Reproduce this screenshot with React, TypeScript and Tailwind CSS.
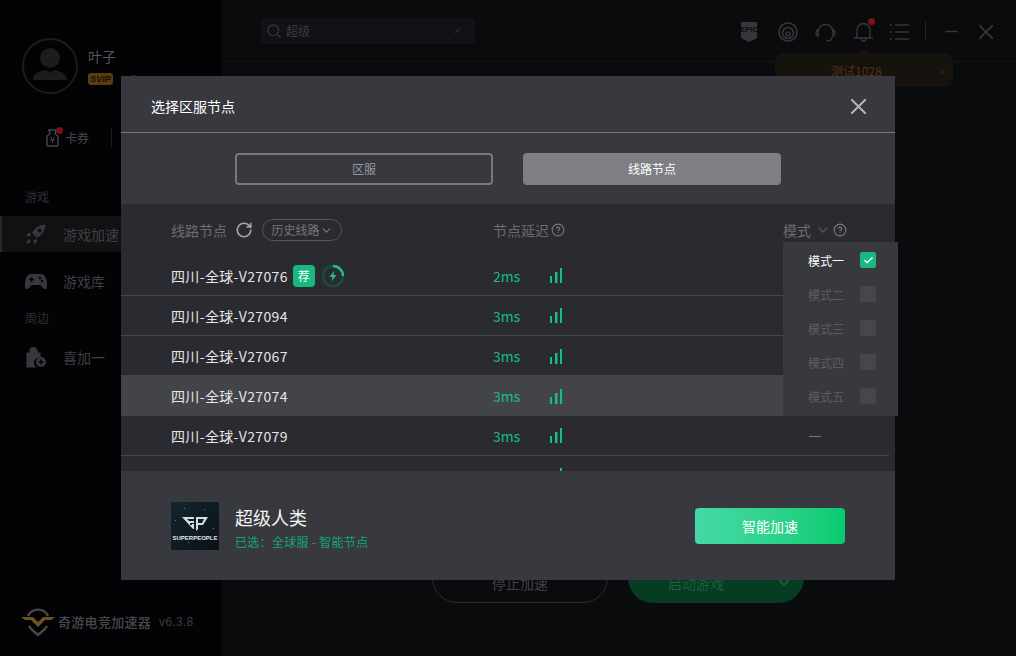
import React from 'react';
import { ChevronDown, RotateCw, Search, X, Check, Minus, HelpCircle } from 'lucide-react';

const font = { fontFamily: '"Noto Sans CJK SC", "Noto Sans", sans-serif' };

const rows = [
  { name: '四川-全球-V27076', ms: '2ms', best: true, line: true },
  { name: '四川-全球-V27094', ms: '3ms', line: true },
  { name: '四川-全球-V27067', ms: '3ms' },
  { name: '四川-全球-V27074', ms: '3ms', hover: true },
  { name: '四川-全球-V27079', ms: '3ms', dash: true, line: true },
];

const modes = ['模式一', '模式二', '模式三', '模式四', '模式五'];

const Signal = () => (
  <svg width="14" height="16" viewBox="0 0 14 16" className="block">
    <rect x="1" y="8" width="2" height="7" fill="#16bd84" />
    <rect x="6" y="4" width="2.500" height="11" fill="#16bd84" />
    <rect x="11" y="0" width="2" height="15" fill="#16bd84" />
  </svg>
);

const Bolt = () => (
  <svg width="24" height="24" viewBox="0 0 24 24" className="block">
    <circle cx="12" cy="12" r="10" fill="none" stroke="#1f4a42" strokeWidth="2.400" />
    <path d="M12 2a10 10 0 0 1 10 10" fill="none" stroke="#1cc08a" strokeWidth="2.400" />
    <path d="M13.500 6.500 8.500 13h3l-1 4.500 5-6.500h-3z" fill="#1cc08a" />
  </svg>
);

const SuperPeople = () => (
  <div className="w-12 h-12 bg-gradient-to-br from-[#12262e] to-[#0a1218] flex flex-col items-center justify-center relative">
    <span className="absolute left-[13px] top-[6px] w-px h-px bg-[#8a7350]" />
    <span className="absolute left-[33px] top-[7px] w-px h-px bg-[#6b7a80]" />
    <span className="absolute left-[4px] top-[18px] w-px h-px bg-[#6b7a80]" />
    <span className="absolute left-[42px] top-[26px] w-px h-px bg-[#8a7350]" />
    <span className="absolute left-[17px] top-[40px] w-px h-px bg-[#8a7350]" />
    <svg width="26" height="14" viewBox="0 0 26 14" className="block mt-[8px]">
      <path d="M0 0h12v2H5l2 2h5v2H8v2h2V7h2v5h-1zM14 0h12l-5 8h-5v4l-2 2zM16 2v4h4l2-4z" fill="#d8dde0" />
    </svg>
    <span className="text-[6px] leading-[8px] font-bold text-[#e6e8ea] mt-[3px] whitespace-nowrap" style={{ fontFamily: '"Liberation Sans", sans-serif' }}>SUPERPEOPLE</span>
  </div>
);

const Sidebar = () => (
  <aside className="w-[222px] shrink-0 bg-[#030305] flex flex-col text-[#3f4044] text-[14px]">
    <div className="flex items-center gap-[10px] pl-[22px] pt-[38px]">
      <div className="w-[56px] h-[56px] rounded-full border-2 border-[#1c1c1f] flex items-end justify-center overflow-hidden">
        <svg width="36" height="34" viewBox="0 0 36 34" className="mb-[11px]">
          <circle cx="18" cy="11" r="10" fill="#1c1c1f" />
          <path d="M1 33c0-7 8-9 13-10l4 3 4-3c5 1 13 3 13 10z" fill="#1c1c1f" />
        </svg>
      </div>
      <div className="flex flex-col gap-[8px]">
        <span className="text-[14px] leading-[18px] text-[#55565a]">叶子</span>
        <div className="flex items-center">
          <span className="w-[25px] h-[12px] rounded-[3px] bg-[#5a3b12] text-[#1a1207] text-[9px] leading-[12px] font-bold italic text-center" style={{ fontFamily: '"Liberation Sans", sans-serif' }}>SVIP</span>
          <span className="ml-[16px] w-[9px] h-[9px] rounded-full bg-[#2a2a2d]" />
        </div>
      </div>
    </div>
    <div className="flex items-center pl-[46px] mt-[34px] h-[20px] text-[12px]">
      <div className="relative mr-[6px]">
        <svg width="13" height="18" viewBox="0 0 13 18" className="block">
          <path d="M3 1h7l-1 4 3 2v9a1 1 0 0 1-1 1H2a1 1 0 0 1-1-1V7l3-2z" fill="none" stroke="#47484c" strokeWidth="1.400" />
          <path d="M4.500 8 6.500 10.500 8.500 8M4 11h5M6.500 10.500V14" fill="none" stroke="#47484c" strokeWidth="1" />
        </svg>
        <span className="absolute -top-[2px] -right-[4px] w-[7px] h-[7px] rounded-full bg-[#7c1116]" />
      </div>
      <span className="text-[#47484c]">卡券</span>
      <span className="w-px h-[20px] bg-[#1c1c1f] ml-[22px]" />
    </div>
    <div className="pl-[25px] mt-[39px] h-[20px] leading-[20px] text-[12px] text-[#2f3034]">游戏</div>
    <div className="flex items-center gap-[17px] pl-[24px] h-[36px] mt-[9px] bg-[#111113] border-l-2 border-[#2a2a2d]">
      <svg width="20" height="20" viewBox="0 0 20 20" className="block" fill="#37383b">
        <path d="M19.500.5C13 1 9 4 6 9l5 5c5-3 8-7 8.500-13.500zM13.500 4.500a2 2 0 1 0 .01 0z" fillRule="evenodd" />
        <path d="M5 9H2L0 12l4 .5zM11 15v3l-3 2-.5-4zM3 15c-2 1-2.500 3-2.500 4.500 1.500 0 3.500-.5 4.500-2.500z" />
      </svg>
      <span>游戏加速</span>
    </div>
    <div className="flex items-center gap-[16px] pl-[25px] h-[36px] mt-[11px]">
      <svg width="22" height="17" viewBox="0 0 22 17" className="block" fill="#37383b">
        <path d="M6 1h10c3 0 5 3 6 8s0 7-2 7-3-2-4.500-4h-9C5 14 4 16 2 16s-3-2-2-7 3-8 6-8z" />
        <path d="M6.500 4v5M4 6.500h5" stroke="#030305" strokeWidth="1.500" />
        <circle cx="15" cy="5" r="1.200" fill="#030305" />
        <circle cx="17" cy="8" r="1.200" fill="#030305" />
      </svg>
      <span>游戏库</span>
    </div>
    <div className="pl-[25px] h-[20px] leading-[20px] mt-[9px] text-[12px] text-[#2f3034]">周边</div>
    <div className="flex items-center gap-[16px] pl-[25px] h-[36px] mt-[11px]">
      <svg width="22" height="22" viewBox="0 0 22 22" className="block">
        <path d="M2 7h13v4a6 6 0 0 0-5 10H2zM5 7V5a3.500 3.500 0 0 1 7 0v2" fill="#37383b" stroke="#37383b" strokeWidth="1.200" />
        <circle cx="16" cy="16" r="5" fill="#37383b" />
        <path d="M16 13.500v5M13.500 16h5" stroke="#030305" strokeWidth="1.400" />
      </svg>
      <span>喜加一</span>
    </div>
    <div className="mt-auto mb-[19px] pl-[21px] flex items-center">
      <svg width="34" height="30" viewBox="0 0 34 30" className="block">
        <path d="M7 9a11 11 0 0 1 20 0M8 19c2 4 6 6 9 9 3-3 7-5 9-9" fill="none" stroke="#47484c" strokeWidth="2.400" />
        <path d="M0 10h12l5 5 5-5h12l-4 3h-6l-7 7-7-7H4z" fill="#6b5422" />
      </svg>
      <span className="ml-[3px] text-[13px] tracking-[0.3px] font-medium text-[#47484c]">奇游电竞加速器</span>
      <span className="ml-[8px] text-[12px] tracking-[0.3px] text-[#3a3b40]" style={{ fontFamily: '"Liberation Sans", sans-serif' }}>v6.3.8</span>
    </div>
  </aside>
);

const Main = () => (
  <main className="flex-1 bg-[#0a0b0d] flex flex-col relative">
    <header className="h-[62px] border-b border-[#111215] flex items-center shrink-0">
      <div className="ml-[39px] w-[214px] h-[26px] rounded-[4px] bg-[#111215] flex items-center px-[5px] text-[12px] text-[#3c3d41]">
        <Search size={16} stroke="#333438" />
        <span className="ml-[4px]">超级</span>
        <X size={9} stroke="#36373b" className="ml-auto mr-[8px]" />
      </div>
      <div className="ml-auto flex items-center pt-[2px] text-[#36373b]">
        <svg width="16" height="20" viewBox="0 0 16 20" className="mr-[21px] block">
          <path d="M0 0h16v16l-8 4-8-4z" fill="#36373b" />
          <text x="8" y="10" textAnchor="middle" fontSize="8" fontWeight="700" fill="#0a0b0d" style={{ fontFamily: '"Liberation Sans", sans-serif' }}>EPIC</text>
        </svg>
        <svg width="20" height="20" viewBox="0 0 20 20" className="mr-[17px] block" fill="none" stroke="#36373b" strokeWidth="1.600">
          <circle cx="10" cy="10" r="9" />
          <circle cx="10" cy="11" r="5.500" />
          <circle cx="10" cy="12" r="2" />
        </svg>
        <svg width="21" height="20" viewBox="0 0 21 20" className="mr-[18px] block" fill="none" stroke="#36373b" strokeWidth="1.400">
          <path d="M3 10a7.500 7.500 0 0 1 15 0" />
          <path d="M3 7.500C1.500 8.500 1 10 1 11s.5 2.500 2 3.500zM18 7.500c1.500 1 2 2.500 2 3.500s-.5 2.500-2 3.500z" />
          <path d="M17 15c0 3-3 4-5.500 4" />
        </svg>
        <div className="relative mr-[17px]">
          <svg width="19" height="21" viewBox="0 0 19 21" className="block" fill="none" stroke="#36373b" strokeWidth="1.400">
            <path d="M0 17h19M3 17V9a6.500 6.500 0 0 1 13 0v8M7 17a2.500 3 0 0 0 5 0" />
          </svg>
          <span className="absolute -top-[3px] -right-[2px] w-[7px] h-[7px] rounded-full bg-[#7c1116]" />
        </div>
        <svg width="19" height="16" viewBox="0 0 19 16" className="mr-[16px] block" stroke="#36373b" strokeWidth="1.500">
          <path d="M5 1h14M5 8h14M5 15h14M0 1h2M0 8h2M0 15h2" />
        </svg>
        <span className="w-px h-[19px] bg-[#26272a] mr-[16px]" />
        <Minus size={19} strokeWidth={2} className="mr-[18px]" />
        <svg width="14" height="14" viewBox="0 0 14 14" className="mr-[23px] block" stroke="#36373b" strokeWidth="1.700">
          <path d="M0 0l14 14M14 0 0 14" />
        </svg>
      </div>
    </header>
    {/* notice under the bell */}
    <div className="absolute left-[553px] top-[53px] w-[178px] h-[34px] rounded-[8px] bg-[#16120d] flex items-center pt-[2px] text-[12px] text-[#4f3413]">
      <span className="absolute left-[84px] -top-[4px] w-0 h-0 border-x-[5px] border-x-transparent border-b-[4px] border-b-[#16120d]" />
      <span className="ml-[56px]">测试1028</span>
      <X size={9} className="ml-auto mr-[6px]" />
    </div>
    <div className="mt-auto mb-[53px] ml-[210px] flex items-center gap-[20px] text-[14px]">
      <div className="w-[176px] h-[50px] rounded-[25px] border border-[#2b2c2f] flex items-center justify-center pt-[10px] text-[#3f4044]">停止加速</div>
      <div className="w-[176px] h-[50px] rounded-[25px] bg-[#063c22] flex items-center pt-[10px] text-[#1d5f3d]">
        <span className="w-[136px] text-center">启动游戏</span>
        <ChevronDown size={16} strokeWidth={3} className="ml-[12px]" />
      </div>
    </div>
  </main>
);

const Dialog = () => (
  <div className="absolute left-[121px] top-[76px] w-[774px] h-[504px] bg-[#38393f] flex flex-col">
    <div className="h-[57px] shrink-0 border-b border-[#77787c] flex items-center justify-between pt-[4px] pl-[30px] pr-[29px]">
      <span className="text-[14px] text-white">选择区服节点</span>
      <svg width="15" height="15" viewBox="0 0 15 15" className="block" stroke="#b4b5b8" strokeWidth="2">
        <path d="M0 0l15 15M15 0 0 15" />
      </svg>
    </div>
    <div className="h-[71px] shrink-0 flex items-start pt-[20px] pl-[114px] gap-[30px] text-[12px]">
      <button className="w-[258px] h-[32px] rounded-[4px] border-2 border-[#77787c] text-[#97989b]">区服</button>
      <button className="w-[258px] h-[32px] rounded-[4px] bg-[#7e7f84] text-white">线路节点</button>
    </div>
    <div className="flex-1 min-h-0 bg-[#2a2b30] relative overflow-hidden">
      <div className="h-[52px] flex items-center pl-[50px] text-[14px] text-[#6c6d71]">
        <span className="w-[64px]">线路节点</span>
        <RotateCw size={18} stroke="#a6a7aa" strokeWidth={2.200} />
        <span className="ml-[9px] h-[22px] w-[80px] rounded-full border border-[#55565a] flex items-center justify-center text-[12px] text-[#77787c]">
          历史线路<ChevronDown size={13} />
        </span>
        <span className="ml-[151px]">节点延迟</span>
        <HelpCircle size={14} stroke="#77787c" className="ml-[2px]" />
        <span className="ml-[218px]">模式</span>
        <ChevronDown size={16} stroke="#55565a" className="ml-[4px]" />
        <HelpCircle size={14} stroke="#77787c" className="ml-[2px]" />
      </div>
      <ul className="text-[14px]">
        {rows.map(row => (
          <li key={row.name} className={`flex items-center pl-[50px] mr-[6px] ${row.hover ? 'h-[41px] -mt-px pt-[2px] bg-[#434448]' : 'h-[40px] pt-px'} ${row.line ? 'border-b border-[#47484c]' : ''}`}>
            <span className="text-[#e4e6e8] whitespace-nowrap tracking-[0.35px]">{row.name}</span>
            {row.best && (
              <>
                <span className="ml-[5px] w-[22px] h-[22px] rounded-[4px] bg-[#17b981] text-white text-[12px] leading-[22px] text-center">荐</span>
                <span className="ml-[6px]"><Bolt /></span>
              </>
            )}
            <span className="absolute left-[372px] text-[#16bd84]">{row.ms}</span>
            <span className="absolute left-[428px]"><Signal /></span>
            {row.dash && <span className="absolute left-[688px] w-[12px] h-px bg-[#77787c]" />}
          </li>
        ))}
        <li className="flex items-center h-[40px] pl-[50px]">
          <span className="absolute left-[428px]"><Signal /></span>
        </li>
      </ul>
    </div>
    <div className="h-[109px] shrink-0 flex items-center pl-[50px] pr-[50px]">
      <SuperPeople />
      <div className="ml-[16px] flex flex-col">
        <span className="text-[18px] leading-[26px] mt-[3px] text-[#f2f3f4]">超级人类</span>
        <span className="text-[12px] leading-[18px] mt-[3px] tracking-[0.3px] text-[#10a871]">已选：全球服 - 智能节点</span>
      </div>
      <button className="ml-auto w-[150px] h-[36px] rounded-[4px] bg-gradient-to-r from-[#45d9a8] to-[#05cb70] text-white text-[14px] pt-[1px]">智能加速</button>
    </div>
    {/* mode dropdown hangs over the list and the dialog edge */}
    <div className="absolute left-[662px] top-[166px] w-[115px] h-[174px] bg-[#38393e] py-px">
      {modes.map((m, i) => (
        <div key={m} className="h-[34px] flex items-center pl-[25px]">
          <span className={`w-[52px] pt-px text-[12px] ${i === 0 ? 'text-white' : 'text-[#5c5d61]'}`}>{m}</span>
          <span className={`w-[16px] h-[16px] rounded-[2px] flex items-center justify-center ${i === 0 ? 'bg-[#17b981]' : 'bg-[#46474b]'}`}>
            {i === 0 && <Check size={11} stroke="#fff" strokeWidth={3} />}
          </span>
        </div>
      ))}
    </div>
  </div>
);

export default function App() {
  return (
    <div className="w-[1016px] h-[656px] relative flex overflow-hidden" style={font}>
      <Sidebar />
      <Main />
      <Dialog />
    </div>
  );
}
